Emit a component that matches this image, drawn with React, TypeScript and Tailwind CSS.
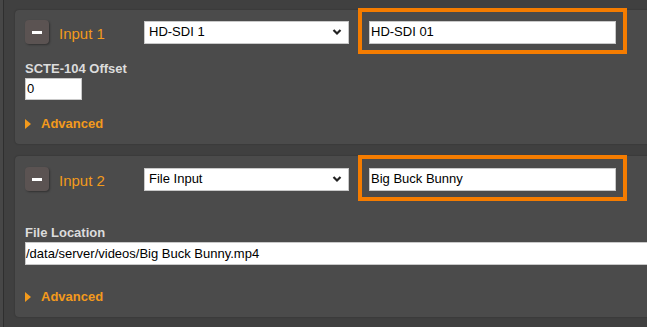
import React from "react"

type InputPanelProps = {
    title: string
    source: string
    name: string
    children: React.ReactNode
    className?: string
}

function MinusButton() {
    return (
        <button type="button" className="w-6 h-6 rounded-[4px] bg-[#5b5352] shadow-[1px_1px_2px_rgba(0,0,0,0.35)] flex items-center justify-center">
            <span className="block w-[10px] h-[3px] bg-white"></span>
        </button>
    )
}

function Advanced() {
    return (
        <div className="flex items-center h-[16px] text-[13px] font-bold text-[#f39a1c]">
            <svg width="6" height="10" viewBox="0 0 6 10" className="mr-[10px]">
                <polygon points="0,0 6,5 0,10" fill="#f39a1c" />
            </svg>
            Advanced
        </div>
    )
}

function InputPanel({ title, source, name, children, className }: InputPanelProps) {
    return (
        <div className={"bg-[#4b4b4b] rounded-[4px] pl-[10px] shadow-[0_0_2px_rgba(0,0,0,0.3)] " + (className ?? "")}>
            <div className="flex items-center h-6">
                <MinusButton />
                <span className="ml-[10px] w-[85px] pt-[5px] text-[15px] text-[#f39a1c]">{title}</span>
                <div className="relative w-[205px] h-[23px] bg-white border border-[#c9c9c9] flex items-center pl-[4px] pr-[6px]">
                    <span className="flex-1 text-[13px] text-black">{source}</span>
                    <svg width="10" height="8" viewBox="0 0 10 8">
                        <polyline points="1.5,2 5,5.5 8.5,2" fill="none" stroke="#222" strokeWidth="2.2" />
                    </svg>
                </div>
                <div className="relative ml-[20px] w-[247px] h-[23px]">
                    <div className="absolute -top-[13px] -bottom-[10px] -left-[11px] -right-[11px] border-4 border-[#f57c00]"></div>
                    <div className="relative w-full h-full bg-white border border-[#c9c9c9] flex items-center pl-[1px] text-[13px] text-black">
                        {name}
                    </div>
                </div>
            </div>
            {children}
        </div>
    )
}

function App() {
    return (
        <div className="w-[647px] h-[327px] overflow-hidden bg-[#404040] flex font-['Liberation_Sans',Arial,sans-serif]">
            <div className="w-[3px] bg-[#474747] shrink-0"></div>
            <div className="w-[1px] bg-[#2f2f2f] shrink-0"></div>
            <div className="pl-[11px] pt-[10px] w-[700px] shrink-0">
                <InputPanel title="Input 1" source="HD-SDI 1" name="HD-SDI 01" className="pt-[10px] pb-[12px]">
                    <div className="mt-[17px] text-[13px] font-bold text-[#dcdcdc] leading-[16px]">SCTE-104 Offset</div>
                    <div className="mt-[1px] w-[57px] h-[22px] bg-white border border-[#c9c9c9] flex items-center pl-[1px] text-[13px] text-black">0</div>
                    <div className="mt-[16px]">
                        <Advanced />
                    </div>
                </InputPanel>
                <InputPanel title="Input 2" source="File Input" name="Big Buck Bunny" className="mt-[12px] pt-[11px] pb-[12px]">
                    <div className="mt-[34px] text-[13px] font-bold text-[#dcdcdc] leading-[16px]">File Location</div>
                    <div className="mt-[1px] w-[680px] h-[23px] bg-white border border-[#c9c9c9] flex items-center pl-[0px] text-[13px] text-black">/data/server/videos/Big Buck Bunny.mp4</div>
                    <div className="mt-[24px]">
                        <Advanced />
                    </div>
                </InputPanel>
            </div>
        </div>
    )
}

export default App
